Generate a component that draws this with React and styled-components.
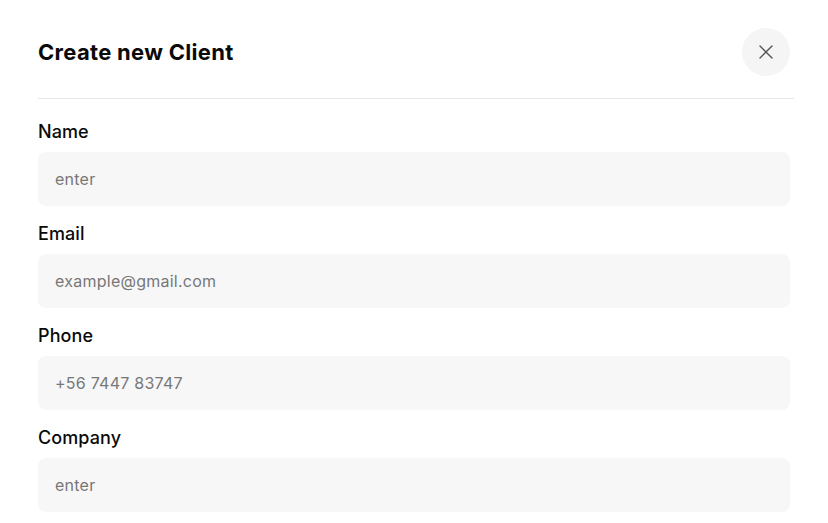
import React from "react";
import styled, { createGlobalStyle } from "styled-components";

const Global = createGlobalStyle`
  html, body { margin: 0; padding: 0; background: #ffffff; }
  body { font-family: Inter, "Noto Sans", sans-serif; color: #0b0b0b; }
  * { box-sizing: border-box; }
`;

const Modal = styled.div`
  width: 828px;
  padding: 28px 34px 0 38px;
  display: flex;
  flex-direction: column;
`;

const Header = styled.div`
  display: flex;
  align-items: center;
  justify-content: space-between;
  padding-right: 4px;
  height: 48px;
`;

const Title = styled.h2`
  margin: 0;
  font-size: 22px;
  line-height: 28px;
  font-weight: 700;
  letter-spacing: 0.3px;
  color: #0a0a0a;
`;

const CloseButton = styled.button`
  width: 48px;
  height: 48px;
  border-radius: 50%;
  border: none;
  background: #f5f5f5;
  display: flex;
  align-items: center;
  justify-content: center;
  padding: 0;
  cursor: pointer;
`;

const Divider = styled.hr`
  margin: 22px 0 21px 0;
  border: none;
  height: 1px;
  background: #e6e6e6;
`;

const Form = styled.form`
  display: flex;
  flex-direction: column;
  gap: 16px;
  padding-right: 4px;
`;

const Field = styled.div`
  display: flex;
  flex-direction: column;
  gap: 8px;
`;

const Label = styled.label`
  font-size: 18px;
  line-height: 24px;
  font-weight: 500;
  letter-spacing: 0.1px;
  color: #0a0a0a;
`;

const Input = styled.input`
  height: 54px;
  width: 100%;
  border: none;
  border-radius: 8px;
  background: #f7f7f7;
  padding: 0 17px;
  font-family: Inter, "Noto Sans", sans-serif;
  font-size: 16px;
  letter-spacing: 0.25px;
  color: #111;
  outline: none;
  &::placeholder { color: #777777; }
`;

const fields = [
  { id: "name", label: "Name", placeholder: "enter" },
  { id: "email", label: "Email", placeholder: "example@gmail.com" },
  { id: "phone", label: "Phone", placeholder: "+56 7447 83747" },
  { id: "company", label: "Company", placeholder: "enter" },
];

export default function App() {
  return (
    <>
      <Global />
      <Modal>
        <Header>
          <Title>Create new Client</Title>
          <CloseButton aria-label="Close">
            <svg width="14" height="14" viewBox="0 0 14 14" fill="none">
              <path d="M1 1L13 13M13 1L1 13" stroke="#555" strokeWidth="1.4" strokeLinecap="round" />
            </svg>
          </CloseButton>
        </Header>
        <Divider />
        <Form>
          {fields.map((f) => (
            <Field key={f.id}>
              <Label htmlFor={f.id}>{f.label}</Label>
              <Input id={f.id} placeholder={f.placeholder} />
            </Field>
          ))}
        </Form>
      </Modal>
    </>
  );
}
